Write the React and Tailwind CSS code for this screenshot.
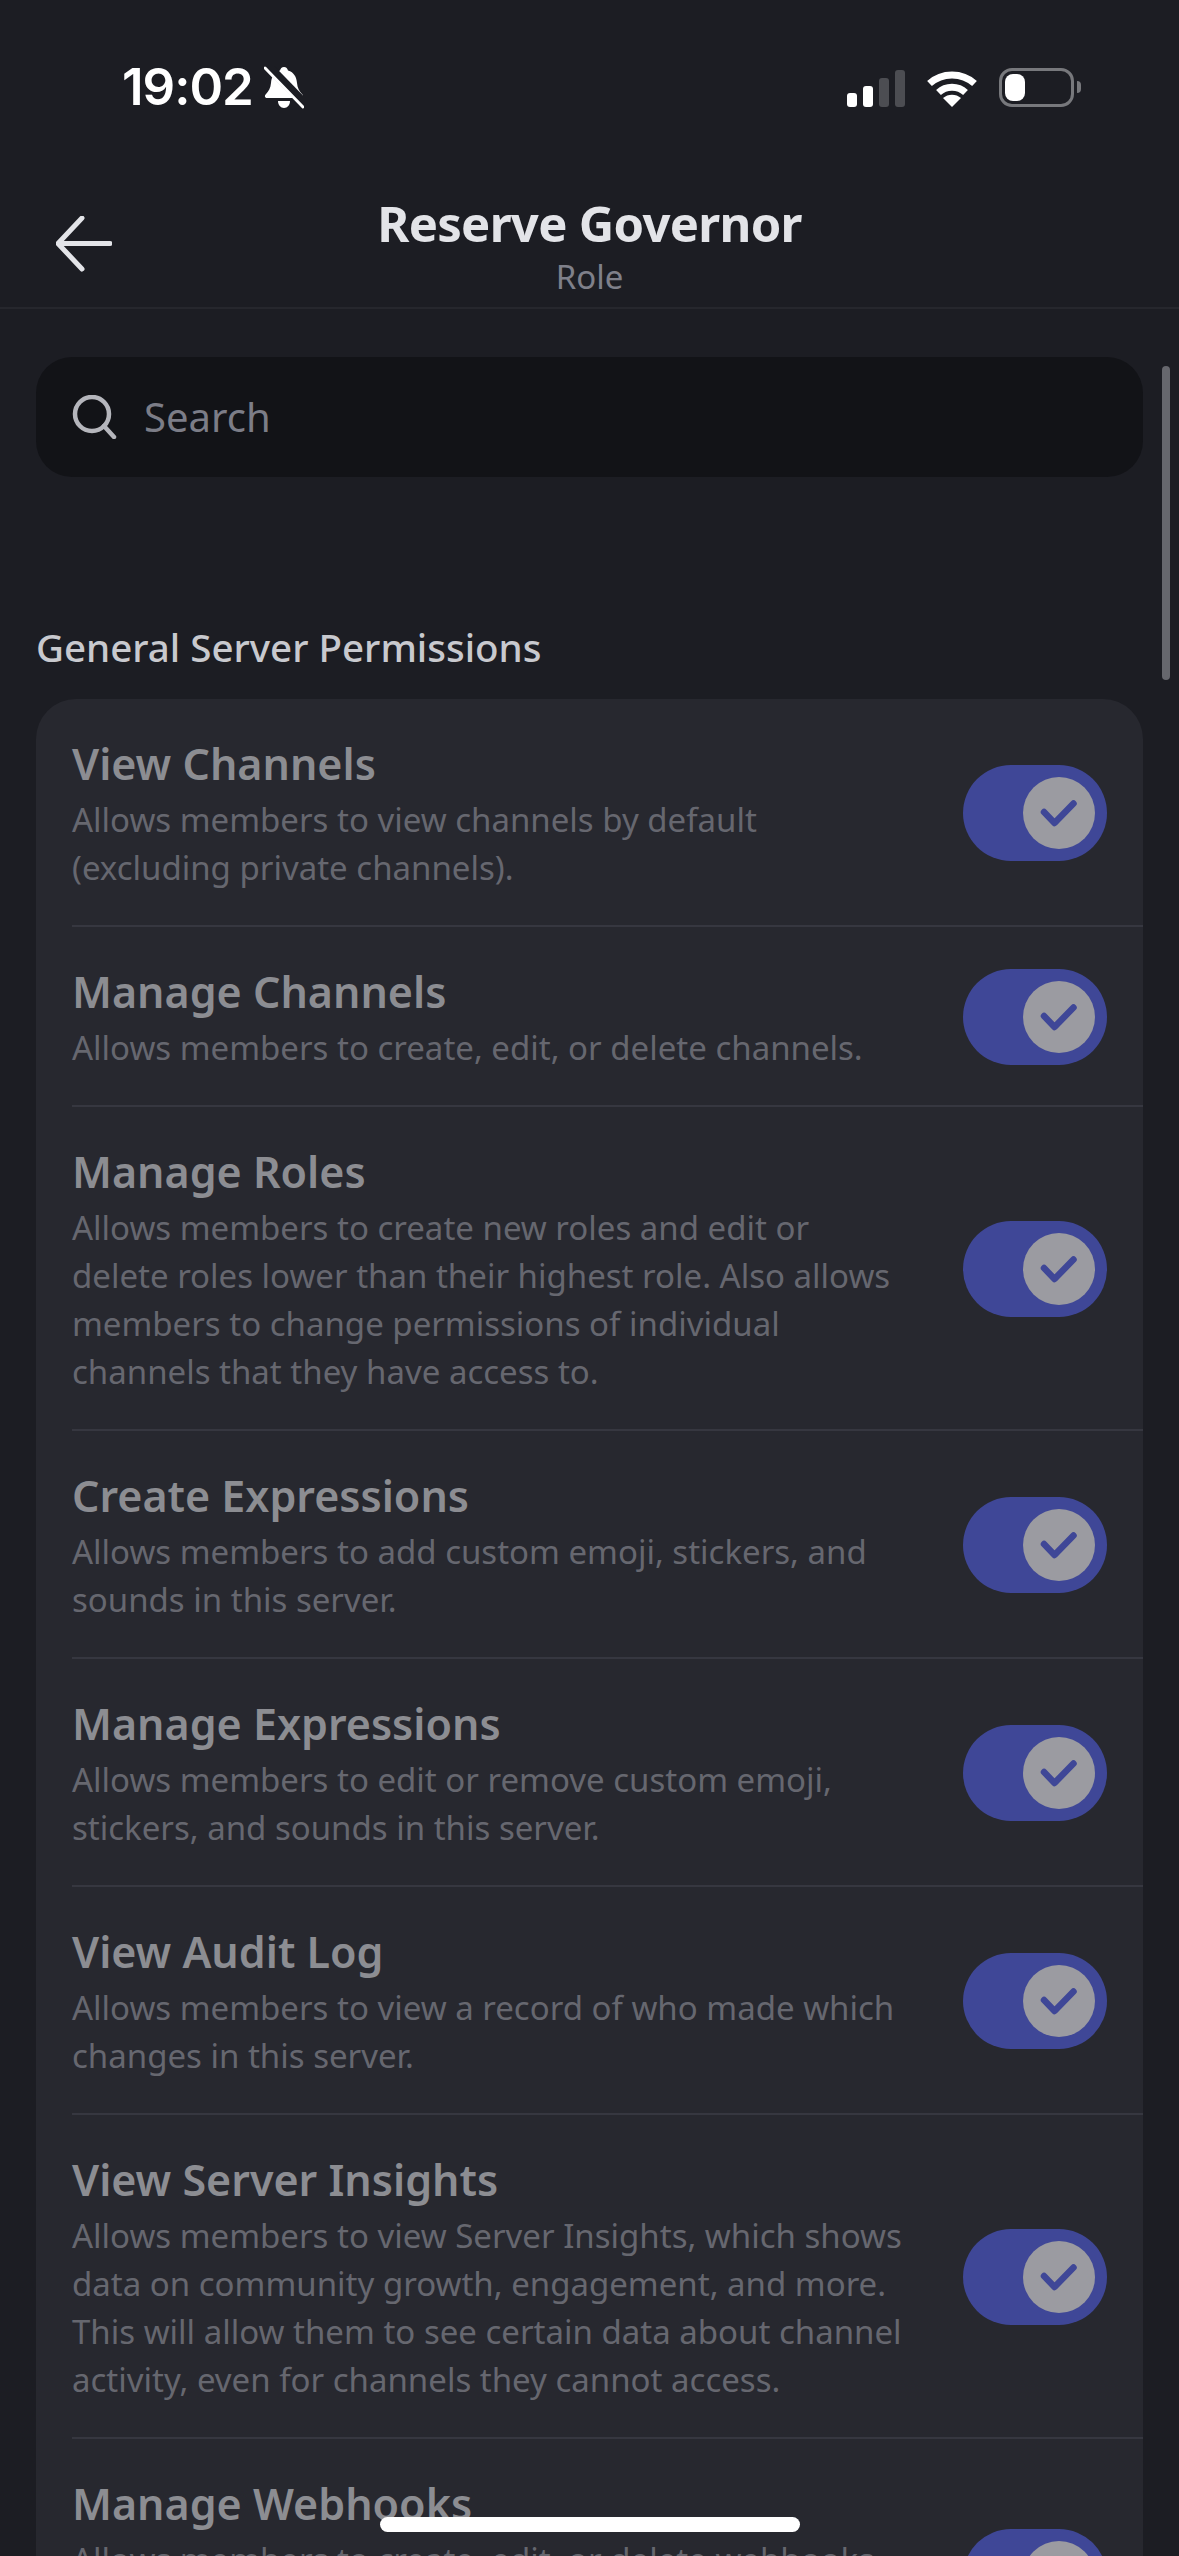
import React from 'react';

const perms = [
  { title: 'View Channels', lines: ['Allows members to view channels by default', '(excluding private channels).'] },
  { title: 'Manage Channels', lines: ['Allows members to create, edit, or delete channels.'] },
  {
    title: 'Manage Roles',
    lines: [
      'Allows members to create new roles and edit or',
      'delete roles lower than their highest role. Also allows',
      'members to change permissions of individual',
      'channels that they have access to.',
    ],
  },
  { title: 'Create Expressions', lines: ['Allows members to add custom emoji, stickers, and', 'sounds in this server.'] },
  { title: 'Manage Expressions', lines: ['Allows members to edit or remove custom emoji,', 'stickers, and sounds in this server.'] },
  { title: 'View Audit Log', lines: ['Allows members to view a record of who made which', 'changes in this server.'] },
  {
    title: 'View Server Insights',
    lines: [
      'Allows members to view Server Insights, which shows',
      'data on community growth, engagement, and more.',
      'This will allow them to see certain data about channel',
      'activity, even for channels they cannot access.',
    ],
  },
  {
    title: 'Manage Webhooks',
    lines: ['Allows members to create, edit, or delete webhooks,', 'which can post messages from other apps or sites', 'into this server.'],
  },
];

const Toggle = () => (
  <div className="-mt-[2px] flex h-[96px] w-[144px] flex-shrink-0 items-center justify-end rounded-full bg-[#3f4797] pr-[12px]">
    <div className="h-[72px] w-[72px] rounded-full bg-[#9b9ba1]">
      <svg viewBox="0 0 72 72" className="h-full w-full" fill="none" stroke="#3f4797" strokeWidth="6.5" strokeLinecap="round" strokeLinejoin="round">
        <path d="M21 35 L31.5 46 L50.5 26.5" />
      </svg>
    </div>
  </div>
);

const PermRow = ({ title, lines, last }) => (
  <div className={`ml-[36px] flex items-center justify-between pr-[36px] pt-[37px] pb-[33px] ${last ? '' : 'border-b-[2px] border-[#363740]'}`}>
    <div>
      <div className="mb-[4px] text-[43px] leading-[56px] font-semibold text-[#8c8d92]">{title}</div>
      <div className="text-[33px] leading-[48px] text-[#66676f]">
        {lines.map((l) => (
          <div key={l} className="whitespace-nowrap">{l}</div>
        ))}
      </div>
    </div>
    <Toggle />
  </div>
);

const StatusBar = () => (
  <div className="flex h-[170px] items-center justify-between pt-[4px] pl-[122px] pr-[98px]">
    <div className="flex items-center gap-[11px]">
      <span className="font-['Inter',sans-serif] text-[51px] leading-[60px] font-semibold tracking-[-1px] text-white">19:02</span>
      {/* muted bell */}
      <svg width="40" height="43" viewBox="0 0 40 43">
        <path d="M20 1c2.200 0 3.600 1.600 4 3.600C30 6.400 32.500 11 33 17c.4 5 2.400 8.400 5.400 11.500 1.400 1.600.6 3.500-1.600 3.500H3.200c-2.200 0-3-1.900-1.600-3.500C4.600 25.400 6.600 22 7 17c.5-6 3-10.600 9-12.400C16.400 2.600 17.800 1 20 1z" fill="#fff" />
        <path d="M14 35h12c0 4-2.600 7-6 7s-6-3-6-7z" fill="#fff" />
        <path d="M3 -1 L42 39" stroke="#1c1d23" strokeWidth="9" />
        <path d="M1 2 L39 41" stroke="#fff" strokeWidth="3" strokeLinecap="round" />
      </svg>
    </div>
    <div className="flex items-end gap-[22px]">
      <div className="flex h-[37px] items-end gap-[6px]">
        <div className="h-[14px] w-[10px] rounded-[3px] bg-white" />
        <div className="h-[21px] w-[10px] rounded-[3px] bg-white" />
        <div className="h-[29px] w-[10px] rounded-[3px] bg-[#4c4d52]" />
        <div className="h-[37px] w-[10px] rounded-[3px] bg-[#4c4d52]" />
      </div>
      <svg width="50" height="37" viewBox="0 0 50 37" fill="none" stroke="#fff" strokeWidth="7">
        <path d="M2.500 13.500C15 2 35 2 47.500 13.500" />
        <path d="M11.500 22.500C19 15.500 31 15.500 38.500 22.500" />
        <path d="M25 37L16 28C21 23.500 29 23.500 34 28Z" fill="#fff" stroke="none" />
      </svg>
      <div className="flex items-center gap-[3px]">
        <div className="flex h-[39px] w-[75px] items-center rounded-[13px] border-[3px] border-[#77787c] pl-[3px]">
          <div className="h-[27px] w-[20px] rounded-[8px] bg-white" />
        </div>
        <div className="h-[12px] w-[4px] rounded-r-full bg-[#77787c]" />
      </div>
    </div>
  </div>
);

export default function App() {
  return (
    <div className="relative h-[2556px] w-[1179px] overflow-hidden bg-[#1c1d23] font-['Noto_Sans',sans-serif]">
      <StatusBar />

      {/* header */}
      <div className="relative flex h-[139px] flex-col items-center border-b-[2px] border-[#26272d] pt-[21px]">
        <svg className="absolute left-[56px] top-[46px]" width="56" height="56" viewBox="0 0 56 56" fill="none" stroke="#e3e4e8" strokeWidth="5" strokeLinecap="round" strokeLinejoin="round">
          <path d="M54 27.500H3" />
          <path d="M26 2 L2 27.500 L26 53" />
        </svg>
        <div className="text-[49px] leading-[64px] font-bold tracking-[-0.7px] text-[#e3e4e8]">Reserve Governor</div>
        <div className="mt-[2px] text-[33px] leading-[40px] text-[#7f808a]">Role</div>
      </div>

      <div className="absolute left-[1162px] top-[366px] h-[314px] w-[8px] rounded-full bg-[#66676d]" />

      <div className="px-[36px] pt-[48px]">
        {/* search */}
        <div className="flex h-[120px] items-center gap-[26px] rounded-[36px] bg-[#121317] pl-[36px]">
          <svg width="46" height="44" viewBox="0 0 46 44" fill="none" stroke="#b5b6bc" strokeWidth="4.500" strokeLinecap="round">
            <circle cx="20" cy="19" r="17" />
            <path d="M32 31 L42 42" />
          </svg>
          <span className="text-[40px] text-[#7c7d87]">Search</span>
        </div>

        <div className="mt-[145px] text-[38.500px] leading-[50px] font-medium text-[#c8c9ce]">General Server Permissions</div>

        <div className="mt-[27px] rounded-[40px] bg-[#27282f]">
          {perms.map((p, i) => (
            <PermRow key={p.title} title={p.title} lines={p.lines} last={i === perms.length - 1} />
          ))}
        </div>
      </div>

      {/* home indicator */}
      <div className="absolute left-[380px] top-[2517px] h-[15px] w-[420px] rounded-[8px] bg-white" />
    </div>
  );
}
